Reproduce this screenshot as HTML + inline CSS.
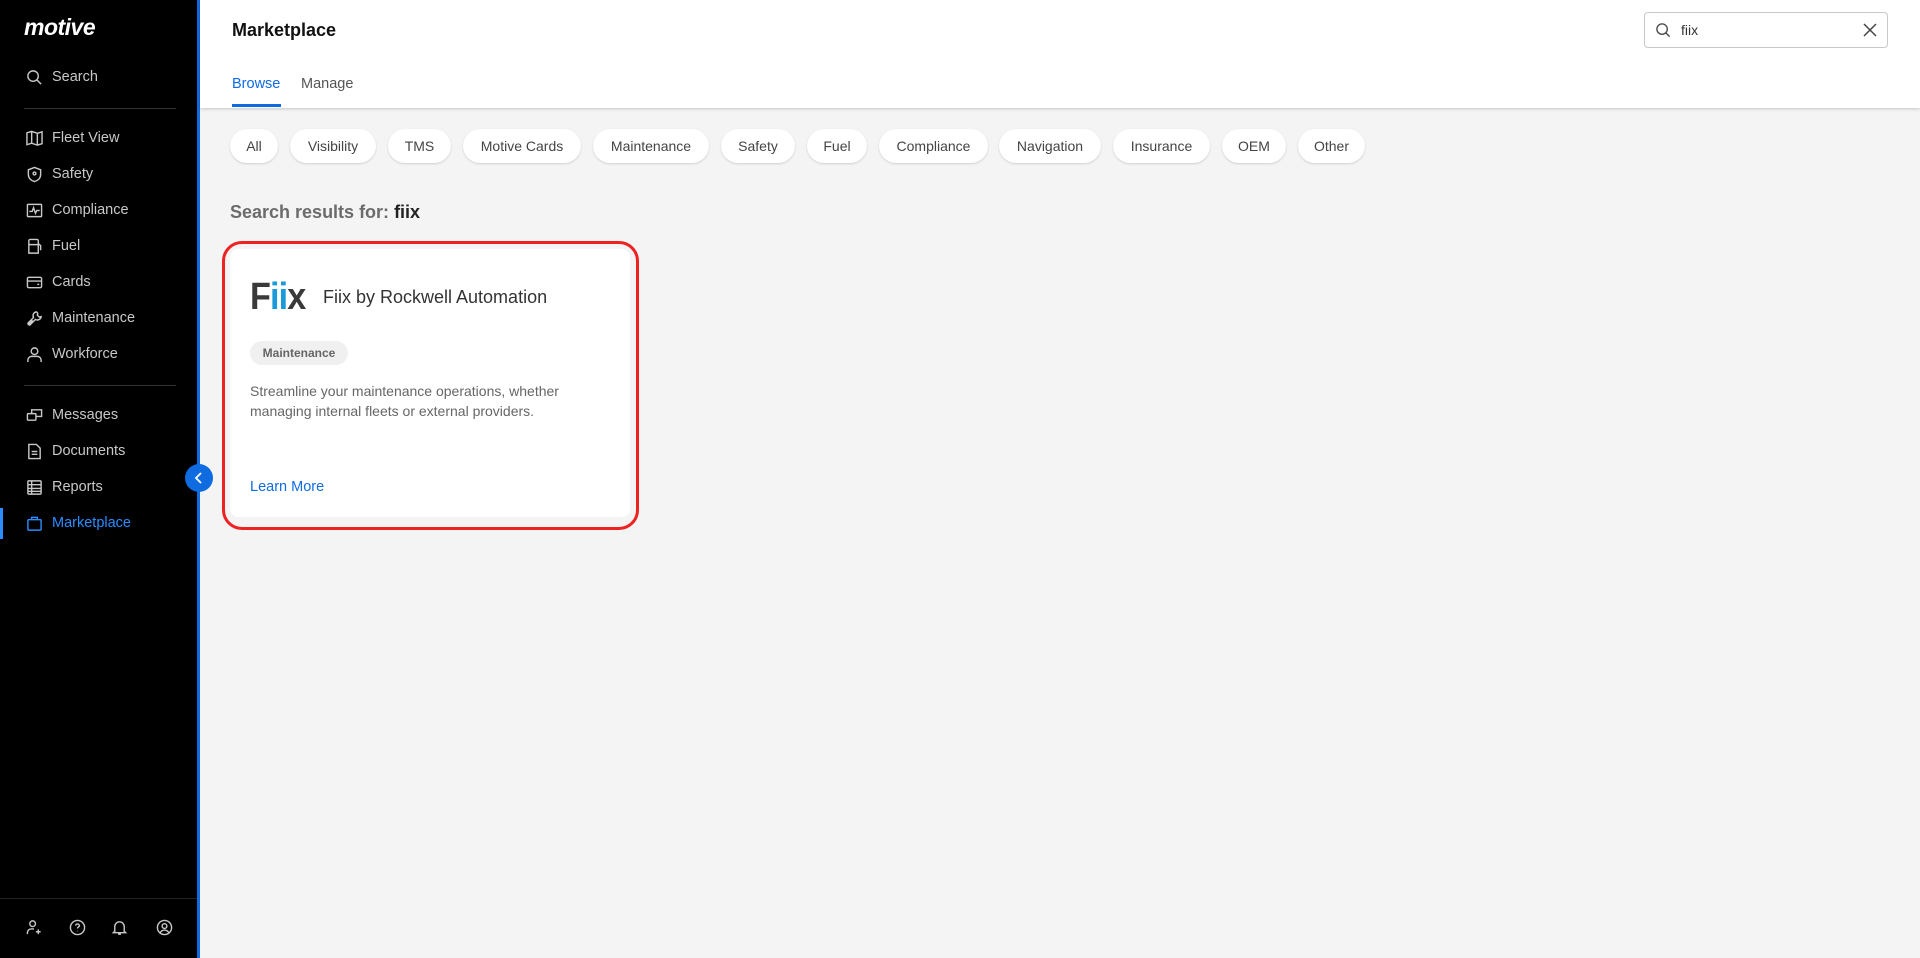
<!DOCTYPE html>
<html><head><meta charset="utf-8"><style>
*{box-sizing:border-box;margin:0;padding:0}
body{width:1920px;height:958px;overflow:hidden;background:#f4f4f4;font-family:"Liberation Sans",sans-serif;position:relative}
.sb{position:absolute;left:0;top:0;width:197px;height:958px;background:#000}
.sbb{position:absolute;left:197px;top:0;width:3px;height:958px;background:#0f6be0}
.logo{position:absolute;left:24px;top:14px;color:#fff;font-size:23px;font-weight:bold;font-style:italic;letter-spacing:-0.5px}
.it{position:absolute;left:26px;height:20px;display:flex;align-items:center;color:#c8c8c8;font-size:14.5px}
.it svg{width:17px;height:17px;margin-right:9px;stroke:#c8c8c8;fill:none;stroke-width:1.5}
.it.act{color:#2a8cff}.it.act svg{stroke:#2a8cff}
.div{position:absolute;left:24px;width:152px;height:1px;background:#333}
.main{position:absolute;left:200px;top:0;right:0;height:108px;background:#fff;box-shadow:0 1px 3px rgba(0,0,0,.2)}
.chip{position:absolute;top:129px;height:34px;border-radius:17px;background:#fff;box-shadow:0 1px 2px rgba(0,0,0,.15);font-size:14px;color:#444;display:flex;align-items:center;justify-content:center}
</style></head><body>
<div class="sb">
<div class="logo">motive</div>
<div class="it" style="top:67px"><svg viewBox="0 0 18 18"><circle cx="7.5" cy="7.5" r="5.5"/><path d="M11.5 11.5l4.5 4.5"/></svg>Search</div>
<div class="div" style="top:108px"></div>
<div class="it" style="top:128px"><svg viewBox="0 0 18 18"><path d="M1 3l5-1.5 6 2 5-1.5v12.5l-5 1.5-6-2-5 1.5zM6 1.5v12.5M12 3.5v12.5"/></svg>Fleet View</div>
<div class="it" style="top:164px"><svg viewBox="0 0 18 18"><path d="M9 1.5l6.5 2.5v5c0 4-3 6.5-6.5 7.5-3.5-1-6.5-3.5-6.5-7.5v-5z"/><circle cx="9" cy="8" r="1.5"/></svg>Safety</div>
<div class="it" style="top:200px"><svg viewBox="0 0 18 18"><rect x="1.5" y="2.5" width="15" height="13" rx="1"/><path d="M3.5 10h3l1.5-4 2 6 1.5-3h3"/></svg>Compliance</div>
<div class="it" style="top:236px"><svg viewBox="0 0 18 18"><path d="M3 16V3a1.5 1.5 0 011.5-1.5h7A1.5 1.5 0 0113 3v13zM3 7h10M13 6l2.5 2v5"/></svg>Fuel</div>
<div class="it" style="top:272px"><svg viewBox="0 0 18 18"><rect x="1.5" y="3.5" width="15" height="11" rx="1.5"/><path d="M1.5 7.5h15M12 11h2"/></svg>Cards</div>
<div class="it" style="top:308px"><svg viewBox="0 0 18 18"><path d="M2 16l5-5M11 2a4 4 0 00-3 6l-6 6 2 2 6-6a4 4 0 006-3l-2 .5-2-2 .5-2z"/></svg>Maintenance</div>
<div class="it" style="top:344px"><svg viewBox="0 0 18 18"><circle cx="9" cy="5.5" r="3.5"/><path d="M2 17v-2a4 4 0 014-4h6a4 4 0 014 4v2"/></svg>Workforce</div>
<div class="div" style="top:385px"></div>
<div class="it" style="top:405px"><svg viewBox="0 0 18 18"><rect x="1.5" y="7" width="9" height="7" rx="1"/><path d="M6 7V3h10.5v7H10.5"/></svg>Messages</div>
<div class="it" style="top:441px"><svg viewBox="0 0 18 18"><path d="M3 1.5h8l4 4v11H3zM6 9h6M6 12h6"/></svg>Documents</div>
<div class="it" style="top:477px"><svg viewBox="0 0 18 18"><rect x="2" y="2" width="14" height="14" rx="1"/><path d="M2 6h14M2 10h14M2 13h14M6 2v14"/></svg>Reports</div>
<div style="position:absolute;left:0;top:508px;width:3px;height:31px;background:#2a8cff"></div>
<div class="it act" style="top:513px"><svg viewBox="0 0 18 18"><rect x="2" y="5" width="14" height="11" rx="1"/><path d="M6 5V2.5h6V5"/></svg>Marketplace</div>
<div class="div" style="top:898px;left:0;width:197px;background:#222"></div>
<div class="it" style="top:917px;left:26px"><svg viewBox="0 0 18 18"><circle cx="7" cy="5" r="3"/><path d="M1.5 16v-1.5a4 4 0 014-4h3M13 11v5M10.5 13.5h5"/></svg></div>
<div class="it" style="top:917px;left:69px"><svg viewBox="0 0 18 18"><circle cx="9" cy="9" r="7.5"/><path d="M7 7a2 2 0 114 .5c-.5 1-2 1.2-2 2.5M9 12.5v.5"/></svg></div>
<div class="it" style="top:917px;left:111px"><svg viewBox="0 0 18 18"><path d="M4 13V8a5 5 0 0110 0v5l1.5 1.5h-13zM7.5 16h3"/></svg></div>
<div class="it" style="top:917px;left:156px"><svg viewBox="0 0 18 18"><circle cx="9" cy="9" r="7.5"/><circle cx="9" cy="7.5" r="2.5"/><path d="M4.5 14.5a5 5 0 019 0"/></svg></div>
</div>
<div class="sbb"></div>
<div class="main">
<div style="position:absolute;left:32px;top:20px;font-size:18px;font-weight:bold;color:#111">Marketplace</div>
<div style="position:absolute;left:32px;top:76px;font-size:14.5px;color:#0f6be0">Browse</div>
<div style="position:absolute;left:32px;top:104px;width:49px;height:3px;background:#0f6be0"></div>
<div style="position:absolute;left:101px;top:76px;font-size:14.5px;color:#555">Manage</div>
<div style="position:absolute;left:1444px;top:12px;width:244px;height:36px;border:1px solid #c8c8c8;border-radius:4px">
<svg style="position:absolute;left:10px;top:9px" width="17" height="17" viewBox="0 0 18 18" fill="none" stroke="#444" stroke-width="1.4"><circle cx="7.5" cy="7.5" r="5.5"/><path d="M11.5 11.5l4 4"/></svg>
<span style="position:absolute;left:36px;top:9px;font-size:14px;color:#333">fiix</span>
<svg style="position:absolute;left:218px;top:10px" width="14" height="14" viewBox="0 0 14 14" stroke="#444" stroke-width="1.5"><path d="M1 1l12 12M13 1L1 13"/></svg>
</div>
</div>
<div class="chip" style="left:230px;width:48px">All</div>
<div class="chip" style="left:290px;width:86px">Visibility</div>
<div class="chip" style="left:388px;width:63px">TMS</div>
<div class="chip" style="left:463px;width:118px">Motive Cards</div>
<div class="chip" style="left:593px;width:116px">Maintenance</div>
<div class="chip" style="left:721px;width:74px">Safety</div>
<div class="chip" style="left:807px;width:60px">Fuel</div>
<div class="chip" style="left:879px;width:109px">Compliance</div>
<div class="chip" style="left:999px;width:102px">Navigation</div>
<div class="chip" style="left:1113px;width:97px">Insurance</div>
<div class="chip" style="left:1222px;width:64px">OEM</div>
<div class="chip" style="left:1298px;width:67px">Other</div>
<div style="position:absolute;left:230px;top:202px;font-size:18px;font-weight:bold;color:#6b6b6b">Search results for: <span style="color:#222">fiix</span></div>
<div style="position:absolute;left:222px;top:241px;width:417px;height:289px;border:3px solid #ee2222;border-radius:20px"></div>
<div style="position:absolute;left:230px;top:249px;width:400px;height:268px;background:#fff;border-radius:8px">
<div style="position:absolute;left:20px;top:31px;font-size:38px;font-weight:bold;color:#3a3a3a;letter-spacing:-1px;line-height:34px;transform:scaleX(0.9);transform-origin:left">F<span style="color:#1a9ad8">ii</span>x</div>
<div style="position:absolute;left:93px;top:38px;font-size:18px;color:#333">Fiix by Rockwell Automation</div>
<div style="position:absolute;left:20px;top:92px;width:98px;height:24px;border-radius:12px;background:#f0f0f0;font-size:12px;font-weight:bold;color:#666;display:flex;align-items:center;justify-content:center">Maintenance</div>
<div style="position:absolute;left:20px;top:132px;width:370px;font-size:14px;line-height:20px;color:#666">Streamline your maintenance operations, whether managing internal fleets or external providers.</div>
<div style="position:absolute;left:20px;top:230px;font-size:14.5px;color:#0f6be0">Learn More</div>
</div>
<div style="position:absolute;left:185px;top:464px;width:28px;height:28px;border-radius:50%;background:#0f6be0"><svg width="28" height="28" viewBox="0 0 28 28" fill="none" stroke="#fff" stroke-width="1.8"><path d="M16 9l-5 5 5 5"/></svg></div>
</body></html>
